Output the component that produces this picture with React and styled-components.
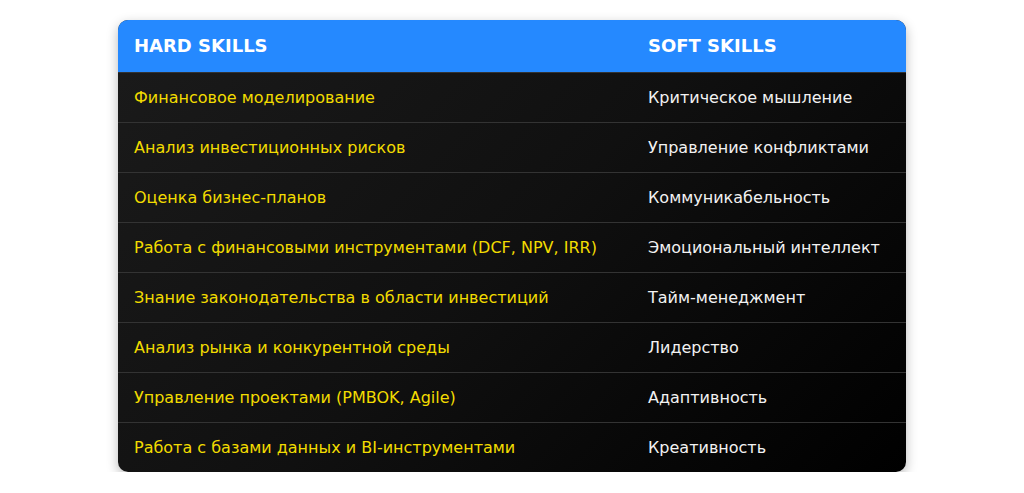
import React from 'react';
import styled, { createGlobalStyle } from 'styled-components';

const GlobalStyle = createGlobalStyle`
  body {
    margin: 0;
    background: #ffffff;
    font-family: "DejaVu Sans", "Liberation Sans", sans-serif;
  }
`;

const rows = [
  ['Финансовое моделирование', 'Критическое мышление'],
  ['Анализ инвестиционных рисков', 'Управление конфликтами'],
  ['Оценка бизнес-планов', 'Коммуникабельность'],
  ['Работа с финансовыми инструментами (DCF, NPV, IRR)', 'Эмоциональный интеллект'],
  ['Знание законодательства в области инвестиций', 'Тайм-менеджмент'],
  ['Анализ рынка и конкурентной среды', 'Лидерство'],
  ['Управление проектами (PMBOK, Agile)', 'Адаптивность'],
  ['Работа с базами данных и BI-инструментами', 'Креативность']
];

export default function App() {
  return (
    <>
      <GlobalStyle />
      <Page>
        <Card>
          <Table>
            <thead>
              <tr>
                <HeadCell $wide>HARD SKILLS</HeadCell>
                <HeadCell>SOFT SKILLS</HeadCell>
              </tr>
            </thead>
            <tbody>
              {rows.map(([hard, soft], i) => (
                <Row key={i} $last={i === rows.length - 1}>
                  <Cell $hard>{hard}</Cell>
                  <Cell>{soft}</Cell>
                </Row>
              ))}
            </tbody>
          </Table>
        </Card>
      </Page>
    </>
  );
}

const Page = styled.div`
  display: flex;
  justify-content: center;
  padding-top: 20px;
`;

const Card = styled.div`
  width: 788px;
  border-radius: 10px;
  overflow: hidden;
  background: linear-gradient(135deg, #1b1b1b 0%, #101010 50%, #000000 100%);
  box-shadow: 0 4px 12px rgba(0, 0, 0, 0.28);
`;

const Table = styled.table`
  width: 100%;
  border-collapse: collapse;
  table-layout: fixed;
`;

const HeadCell = styled.th`
  width: ${(p) => (p.$wide ? '514px' : 'auto')};
  height: 52px;
  padding: 0 16px;
  background: #2589ff;
  color: #ffffff;
  font-size: 18px;
  font-weight: bold;
  text-align: left;
  border-bottom: 1px solid #333333;
  box-sizing: border-box;
`;

const Row = styled.tr`
  border-bottom: ${(p) => (p.$last ? 'none' : '1px solid #333333')};
`;

const Cell = styled.td`
  height: 50px;
  padding: 0 16px;
  font-size: 16px;
  color: ${(p) => (p.$hard ? '#f2dc00' : '#f2f2f2')};
  box-sizing: border-box;
  white-space: nowrap;
`;
